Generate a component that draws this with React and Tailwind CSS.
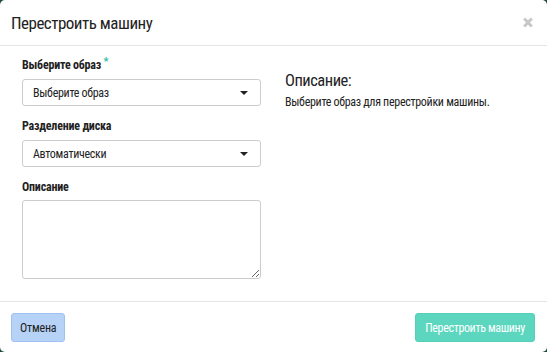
import React from "react";

const font = { fontFamily: '"Roboto Condensed", "Liberation Sans", sans-serif' };

function Caret() {
  return (
    <svg width="8" height="4" viewBox="0 0 8 4" className="text-[#222]">
      <path d="M0 0 L8 0 L4 4 Z" fill="currentColor" />
    </svg>
  );
}

function Select({ value }) {
  return (
    <div className="flex items-center justify-between h-[27px] border border-[#cccccc] rounded-[3px] pl-[10px] pr-[12px] text-[12px] tracking-[-0.3px] text-[#222]">
      <span>{value}</span>
      <Caret />
    </div>
  );
}

export default function App() {
  return (
    <div className="w-[547px] h-[352px] bg-[#1f4a44]" style={font}>
      <div className="w-full h-full bg-white rounded-[5px] flex flex-col">
        <div className="h-[46px] border-b border-[#e5e5e5] flex items-center justify-between pl-[11px] pr-[14px]">
          <span className="text-[17px] tracking-[-0.5px] text-[#222] leading-none pt-[1px]">Перестроить машину</span>
          <svg width="10" height="11" viewBox="0 0 10 11">
            <path d="M1.2 1.5 L8.8 9.5 M8.8 1.5 L1.2 9.5" stroke="#c8c8c8" strokeWidth="3" strokeLinecap="butt" />
          </svg>
        </div>
        <div className="flex-1 flex px-[22px] pt-[11px] gap-[24px]">
          <div className="w-[239px] flex flex-col">
            <label className="text-[12px] font-bold tracking-[-0.2px] text-[#222] leading-[17px] mb-[5px]">
              Выберите образ <span className="text-[#2cbf9f] text-[11px] relative -top-[4px]">*</span>
            </label>
            <Select value="Выберите образ" />
            <label className="text-[12px] font-bold tracking-[-0.2px] text-[#222] leading-[17px] mt-[12px] mb-[5px]">Разделение диска</label>
            <Select value="Автоматически" />
            <label className="text-[12px] font-bold tracking-[-0.2px] text-[#222] leading-[17px] mt-[12px] mb-[4px]">Описание</label>
            <textarea className="h-[79px] border border-[#cccccc] rounded-[3px] resize-y outline-none" />
          </div>
          <div className="flex-1 pt-[13px]">
            <div className="text-[16.5px] tracking-[-0.5px] text-[#222] leading-[22px]">Описание:</div>
            <div className="text-[12px] tracking-[-0.3px] text-[#222] mt-[2px] leading-[17px]">Выберите образ для перестройки машины.</div>
          </div>
        </div>
        <div className="h-[51px] border-t border-[#e5e5e5] flex items-start justify-between pt-[11px] pl-[11px] pr-[12px]">
          <button className="h-[29px] px-[8px] rounded-[3px] bg-[#b6d2f7] border border-[#a0c2f2] text-[12px] tracking-[-0.2px] text-[#222]">Отмена</button>
          <button className="h-[29px] px-[9px] rounded-[3px] bg-[#5cd6bf] border border-[#54cfb8] text-[12px] tracking-[-0.35px] text-white">Перестроить машину</button>
        </div>
      </div>
    </div>
  );
}
